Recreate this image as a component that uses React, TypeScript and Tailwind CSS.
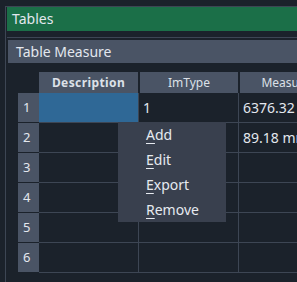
import React from "react";

const rows = [
  { n: "1", im: "1", m: "6376.32", sel: true },
  { n: "2", im: "", m: "89.18 mm²", sel: false },
  { n: "3", im: "", m: "", sel: false },
  { n: "4", im: "", m: "", sel: false },
  { n: "5", im: "", m: "", sel: false },
  { n: "6", im: "", m: "", sel: false },
];

const menu = [
  ["A", "dd"],
  ["E", "dit"],
  ["E", "xport"],
  ["R", "emove"],
];

export default function App() {
  return (
    <div className="w-[297px] h-[282px] bg-[#1b222b] overflow-hidden relative font-['Noto_Sans',sans-serif] text-[#e3e7ee]">
      <div className="pt-[6px] pl-[5px] h-full">
        <div className="border-l border-t border-[#3d4654] h-full pl-[1px]">
          <div className="h-[24px] bg-[#1b6f48] flex items-center pl-[5px] text-[14px] leading-none">
            Tables
          </div>
          <div className="mt-[6px] border-t border-[#3d4654] pt-[2px] pl-[1px]">
            <div className="h-[23px] bg-[#4a5465] flex items-center pl-[8px] text-[14px] leading-none">
              Table Measure
            </div>
            <div className="mt-[9px] ml-[10px]">
              {/* header */}
              <div className="flex h-[21px] text-[12px] text-[#dce1e8]">
                <div className="w-[21px] shrink-0" />
                <div className="w-[99px] shrink-0 bg-[#4a5465] flex items-center justify-center font-bold tracking-[0.4px]">
                  Description
                </div>
                <div className="w-[2px] shrink-0" />
                <div className="w-[98px] shrink-0 bg-[#4a5465] flex items-center justify-center">
                  ImType
                </div>
                <div className="w-[2px] shrink-0" />
                <div className="w-[92px] shrink-0 bg-[#4a5465] flex items-center justify-center">
                  Measure
                </div>
              </div>
              {/* body */}
              {rows.map((r) => (
                <div key={r.n} className="flex h-[30px] text-[14px]">
                  <div className="w-[21px] shrink-0 h-[29px] bg-[#4a5465] flex items-center pl-[5px] text-[13px]">
                    {r.n}
                  </div>
                  <div
                    className={`w-[100px] shrink-0 border-r border-b border-[#3d4654] ${
                      r.sel ? "bg-[#2f6896]" : ""
                    }`}
                  />
                  <div className="w-[100px] shrink-0 border-r border-b border-[#3d4654] flex items-center pl-[4px]">
                    {r.im}
                  </div>
                  <div className="w-[120px] shrink-0 border-b border-[#3d4654] flex items-center pl-[4px] whitespace-nowrap">
                    {r.m}
                  </div>
                </div>
              ))}
            </div>
          </div>
        </div>
      </div>
      {/* context menu */}
      <div className="absolute left-[118px] top-[122px] w-[108px] h-[100px] bg-[#39404e] flex flex-col text-[14px] text-[#e6eaf0]">
        {menu.map(([a, b]) => (
          <div key={a + b} className="h-[25px] flex items-center pl-[28px] leading-none">
            <span className="underline underline-offset-[3px]">{a}</span>
            <span>{b}</span>
          </div>
        ))}
      </div>
    </div>
  );
}
